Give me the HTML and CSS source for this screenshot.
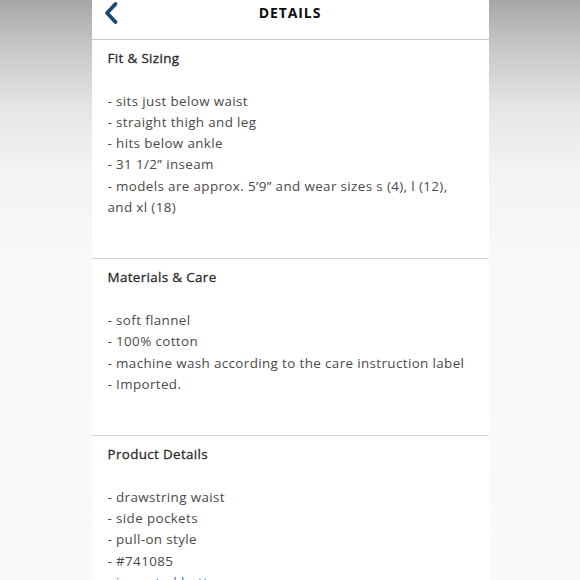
FILE: index.html
```html
<!DOCTYPE html>
<html lang="en">
<head>
<meta charset="utf-8">
<title>Details</title>
<link rel="stylesheet" href="styles.css">
</head>
<body>
<div class="panel">
  <header class="topbar">
    <svg class="back" width="16" height="24" viewBox="0 0 16 24" aria-hidden="true">
      <path d="M12.5 3 L4 12 L12.5 21" fill="none" stroke="#1b4a78" stroke-width="3.8" stroke-linecap="round" stroke-linejoin="round"/>
    </svg>
    <h1 class="title">DETAILS</h1>
  </header>

  <section class="section">
    <h2 class="heading">Fit &amp; Sizing</h2>
    <ul class="items">
      <li>- sits just below waist</li>
      <li>- straight thigh and leg</li>
      <li>- hits below ankle</li>
      <li>- 31 1/2” inseam</li>
      <li>- models are approx. 5’9” and wear sizes s (4), l (12), and xl (18)</li>
    </ul>
  </section>

  <section class="section">
    <h2 class="heading">Materials &amp; Care</h2>
    <ul class="items">
      <li>- soft flannel</li>
      <li>- 100% cotton</li>
      <li>- machine wash according to the care instruction label</li>
      <li>- Imported.</li>
    </ul>
  </section>

  <section class="section">
    <h2 class="heading">Product Details</h2>
    <ul class="items">
      <li>- drawstring waist</li>
      <li>- side pockets</li>
      <li>- pull-on style</li>
      <li>- #741085</li>
      <li class="link">- imported bottoms</li>
    </ul>
  </section>
</div>
</body>
</html>
```

FILE: styles.css
```css
* { box-sizing: border-box; }

html, body {
  margin: 0;
  padding: 0;
  height: 100%;
}

body {
  background: linear-gradient(180deg, #a6a6a6 0px, #c9c9c9 50px, #e6e6e6 110px, #f3f3f3 170px, #f8f8f8 260px, #fafafa 100%);
  display: flex;
  justify-content: center;
  overflow: hidden;
  font-family: "Open Sans", "Liberation Sans", sans-serif;
}

.panel {
  width: 397px;
  min-height: 100%;
  background: #ffffff;
}

.topbar {
  height: 40px;
  border-bottom: 1px solid #c9c9c9;
  display: flex;
  align-items: center;
  position: relative;
  padding-left: 11px;
}

.back {
  display: block;
  margin-top: -14px;
}

.title {
  position: absolute;
  left: 0;
  right: 0;
  top: 3px;
  margin: 0;
  text-align: center;
  font-size: 14px;
  font-weight: 700;
  letter-spacing: 0.9px;
  color: #0d0d0d;
  pointer-events: none;
}

.section {
  padding: 8px 16px 40px;
  border-bottom: 1px solid #d4d4d4;
}

.heading {
  margin: 0 0 21.3px;
  font-size: 13.4px;
  line-height: 21.3px;
  font-weight: 400;
  letter-spacing: 0.35px;
  color: #2a2a2a;
  -webkit-text-stroke: 0.3px #2a2a2a;
}

.items {
  list-style: none;
  margin: 0;
  padding: 0;
}

.items li {
  font-size: 13.4px;
  line-height: 21.3px;
  letter-spacing: 0.38px;
  color: #4a4a4a;
}

.items li.link {
  color: #3d74b0;
}
```
